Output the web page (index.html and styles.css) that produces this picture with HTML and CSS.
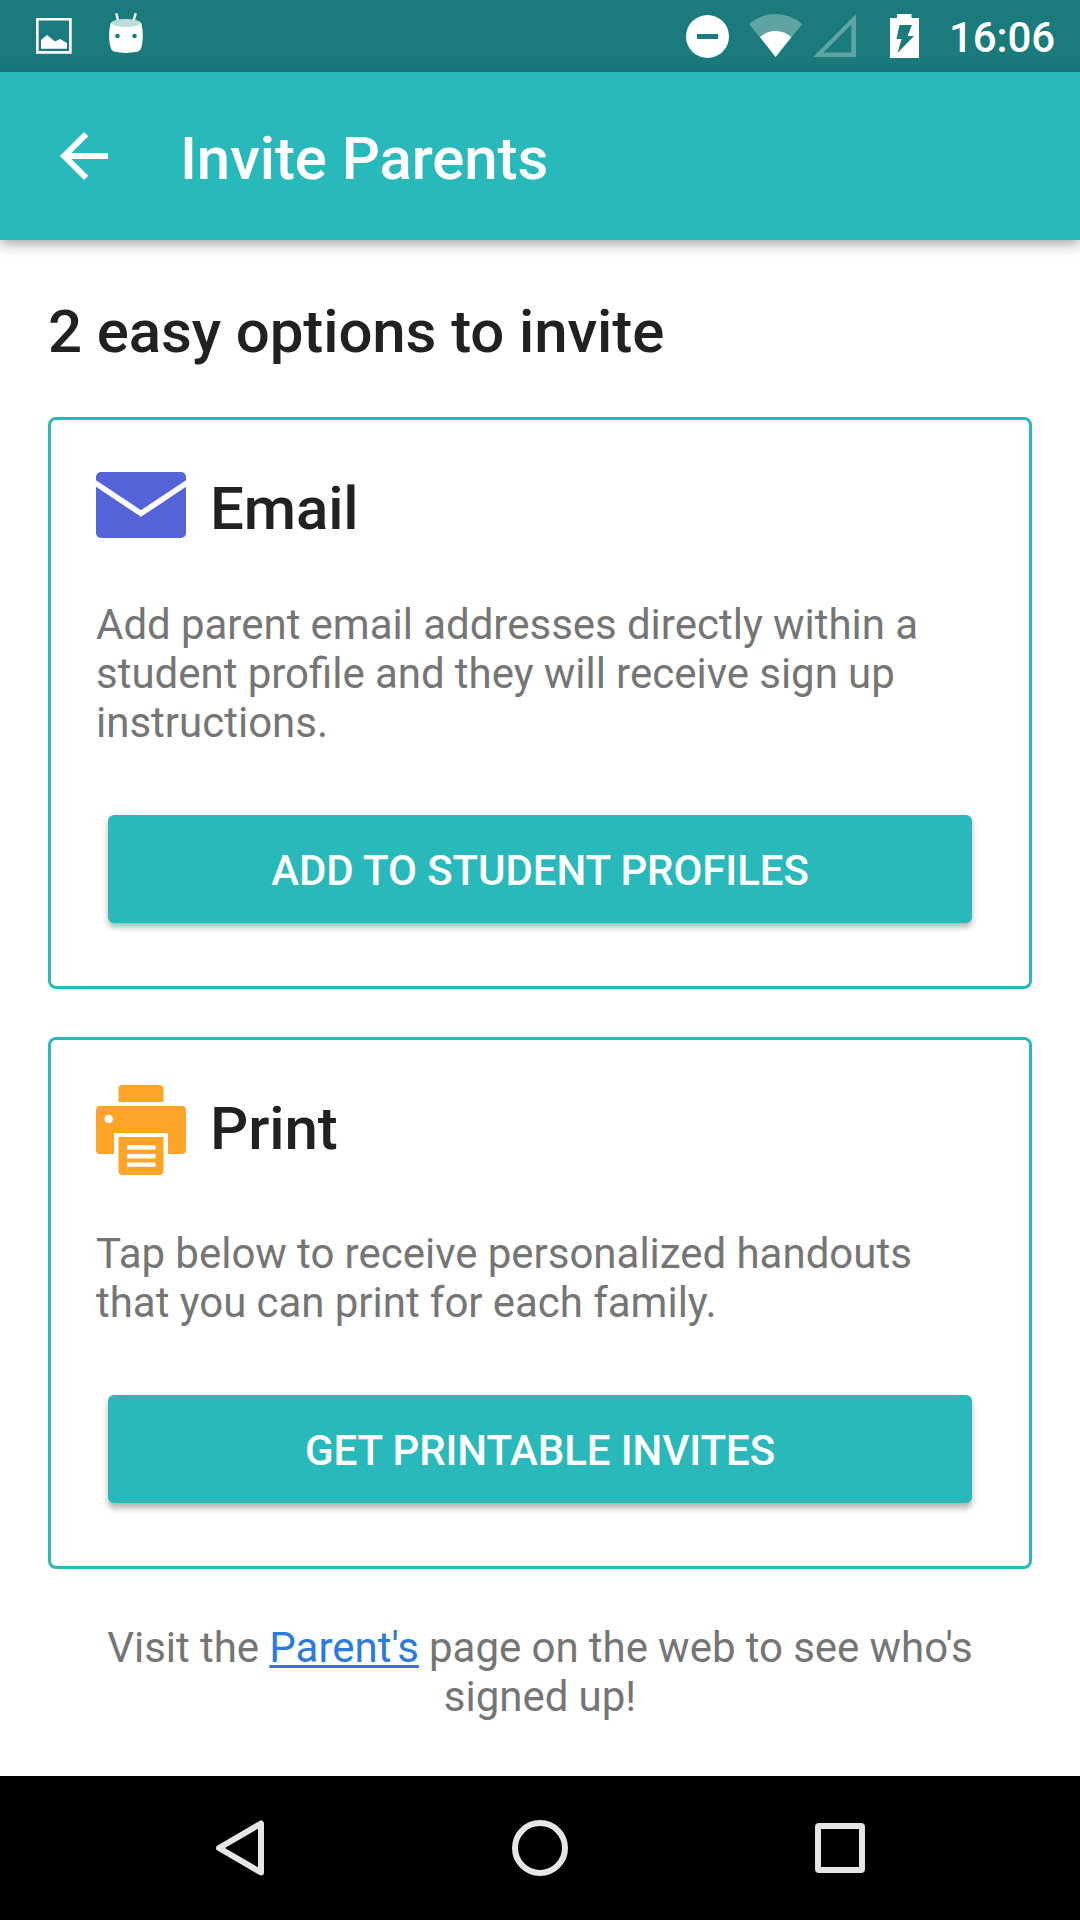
FILE: index.html
```html
<!DOCTYPE html>
<html lang="en">
<head>
<meta charset="utf-8">
<title>Invite Parents</title>
<link rel="stylesheet" href="styles.css">
</head>
<body>
<div class="screen">
  <div class="status-bar">
    <div class="status-group">
      <svg class="ic-picture" width="36" height="36" viewBox="0 0 36 36"><path fill="none" stroke="#fff" stroke-width="2.6" d="M1.3 1.3h33.1v33.1H1.3z"/><path fill="#fff" d="M5 22l6-5 8 6.500 5-2.500 7 4v5.700H5z"/></svg>
      <svg class="ic-cupcake" width="36" height="42" viewBox="0 0 36 42"><path stroke="#fff" stroke-width="2.400" stroke-linecap="round" d="M8.500 2.200L10.200 9M27.500 2.200L25.500 9"/><path fill="#fff" d="M2.500 12C1 18 .500 27 2.500 35Q3.500 39 7 39.800Q18 42 29 39.800Q32.500 39 33.500 35C35.500 27 35 18 33.500 12Q33 8 18 8Q3 8 2.500 12z"/><ellipse cx="18" cy="11" rx="14.300" ry="4" fill="#bfdcdb"/><circle cx="9.500" cy="24" r="2.300" fill="#1b7b7c"/><circle cx="26.500" cy="24" r="2.300" fill="#1b7b7c"/></svg>
    </div>
    <div class="status-group">
      <svg width="44" height="44" viewBox="0 0 44 44"><circle cx="21.500" cy="22.500" r="21.500" fill="#fff"/><path fill="#1b7b7c" d="M11 20h21v5H11z"/></svg>
      <svg class="ic-wifi" width="54" height="44" viewBox="0 0 54 44"><path fill="#fff" fill-opacity=".3" d="M0 10Q12 0 26.600 0T53.300 10L26.600 43z"/><path fill="#fff" d="M11 23Q18 17 26.600 17T42.300 23L26.600 43z"/></svg>
      <svg class="ic-signal" width="43" height="44" viewBox="0 0 43 44"><path fill="#fff" fill-opacity=".3" fill-rule="evenodd" d="M43 0v43H0zM38.300 10.500L10.500 38.500H38.300z"/></svg>
      <svg class="ic-battery" width="29" height="44" viewBox="0 0 29 44"><path fill="#fff" d="M7 0h14.500v4H29v40H0V4h7z"/><path fill="#1b7b7c" d="M9.500 11h12.500L17.500 22H24L7.500 39 11.500 25H6.500z"/></svg>
      <span class="clock">16:06</span>
    </div>
  </div>

  <header class="app-bar">
    <svg class="back" width="48" height="48" viewBox="0 0 48 48"><path fill="none" stroke="#fff" stroke-width="6" d="M26.100 2.100L4.200 24 26.100 45.900M5 24H48"/></svg>
    <div class="app-title">Invite Parents</div>
  </header>

  <main class="content">
    <h1 class="heading">2 easy options to invite</h1>

    <section class="card card-email">
      <div class="card-head">
        <svg width="90" height="66" viewBox="0 0 90 66"><rect width="90" height="66" rx="5" fill="#5464d8"/><path fill="none" stroke="#fff" stroke-width="5.600" d="M-3 9.500L45 41.500 93 9.500"/></svg>
        <h2 class="card-title">Email</h2>
      </div>
      <p class="card-text">Add parent email addresses directly within a student profile and they will receive sign up instructions.</p>
      <button class="button">ADD TO STUDENT PROFILES</button>
    </section>

    <section class="card card-print">
      <div class="card-head">
        <svg width="90" height="90" viewBox="0 0 90 90"><g fill="#fda429"><path d="M22.500 17V4q0-4 4-4h37q4 0 4 4v13z"/><path d="M4 21h82q4 0 4 4v40q0 4-4 4H72V48H18v21H4q-4 0-4-4V25q0-4 4-4z"/><path d="M22.500 52h45v34q0 4-4 4h-37q-4 0-4-4z"/></g><g fill="#fff"><circle cx="12.700" cy="34" r="4.300"/><path d="M31 60.300h28.500v4.400H31zM31 69h28.500v4.400H31zM31 77.400h28.500v4.400H31z"/></g></svg>
        <h2 class="card-title">Print</h2>
      </div>
      <p class="card-text">Tap below to receive personalized handouts that you can print for each family.</p>
      <button class="button">GET PRINTABLE INVITES</button>
    </section>

    <p class="footnote">Visit the <a class="link" href="#">Parent's</a> page on the web to see who's signed up!</p>
  </main>

  <nav class="nav-bar">
    <svg width="60" height="60" viewBox="0 0 60 60"><path fill="none" stroke="#e6e6e6" stroke-width="6" stroke-linejoin="round" d="M51 5.500V54.500L9 30z"/></svg>
    <svg width="60" height="60" viewBox="0 0 60 60"><circle cx="30" cy="30" r="25" fill="none" stroke="#e6e6e6" stroke-width="6"/></svg>
    <svg width="60" height="60" viewBox="0 0 60 60"><rect x="8" y="8" width="44" height="44" rx="1" fill="none" stroke="#e6e6e6" stroke-width="6"/></svg>
  </nav>
</div>
</body>
</html>
```
FILE: styles.css
```css
* { box-sizing: border-box; }

body {
  margin: 0;
  background: #fff;
  font-family: Roboto, sans-serif;
}

svg { display: block; flex: none; }

h1, h2, p { margin: 0; }

.screen {
  display: flex;
  flex-direction: column;
  width: 1080px;
  height: 1920px;
  overflow: hidden;
}

.status-bar {
  display: flex;
  justify-content: space-between;
  height: 72px;
  padding: 0 24px 0 36px;
  background: #1b7b7c;
}

.status-group { display: flex; align-items: flex-start; padding-top: 14px; }
.ic-picture { margin-top: 4px; }
.ic-cupcake { margin: -2px 0 0 36px; }
.ic-wifi { margin-left: 19px; }
.ic-signal { margin-left: 10px; }
.ic-battery { margin-left: 34px; }

.clock {
  width: 107px;
  margin: -1px 0 0 30px;
  color: #fff;
  font-size: 42px;
  font-weight: 500;
  line-height: 49px;
  letter-spacing: -.1px;
}

.app-bar {
  display: flex;
  align-items: center;
  height: 168px;
  padding-left: 60px;
  background: #2ab9bb;
  box-shadow: 0 4px 12px rgba(0, 0, 0, .36);
  z-index: 1;
}

.app-title {
  margin: 5px 0 0 72px;
  color: #fff;
  font-size: 60px;
  font-weight: 500;
  line-height: 71px;
  letter-spacing: -.12px;
}

.content { flex: 1; padding: 56px 48px 0; }

.heading, .card-title {
  color: #212121;
  font-size: 60px;
  font-weight: 500;
  line-height: 71px;
  letter-spacing: -.12px;
}

.heading { margin-bottom: 50px; }

.card {
  padding: 0 45px;
  border: 3px solid #2ab9bb;
  border-radius: 8px;
}

.card-email { height: 572px; padding-top: 52px; margin-bottom: 48px; }
.card-print { height: 532px; padding-top: 45px; }

.card-head { display: flex; gap: 24px; }
.card-email .card-head { height: 72px; margin-bottom: 56px; }
.card-print .card-head { height: 90px; margin-bottom: 54px; }
.card-email .card-title { margin-top: 1px; }
.card-print .card-title { margin-top: 8px; }

.card-text, .footnote {
  color: #757575;
  font-size: 42px;
  line-height: 49px;
  word-spacing: -.25px;
}

.card-text { margin-bottom: 68px; }

.button {
  display: block;
  width: 864px;
  height: 108px;
  margin: 0 auto;
  padding: 2px 0 0;
  border: 0;
  border-radius: 6px;
  background: #2ab9bb;
  box-shadow: 0 4px 6px rgba(0, 0, 0, .3);
  color: #fff;
  font: 500 42px/49px Roboto, sans-serif;
  letter-spacing: -.09px;
}

.card-print .button { box-shadow: 0 5px 6px rgba(0, 0, 0, .3); }

.footnote { padding: 0 48px; margin-top: 54px; text-align: center; }

.link {
  color: #2a7bdc;
  text-decoration: underline;
  text-decoration-thickness: 3px;
  text-underline-offset: 3px;
}

.nav-bar {
  display: flex;
  justify-content: center;
  align-items: center;
  gap: 240px;
  height: 144px;
  background: #000;
}
```
